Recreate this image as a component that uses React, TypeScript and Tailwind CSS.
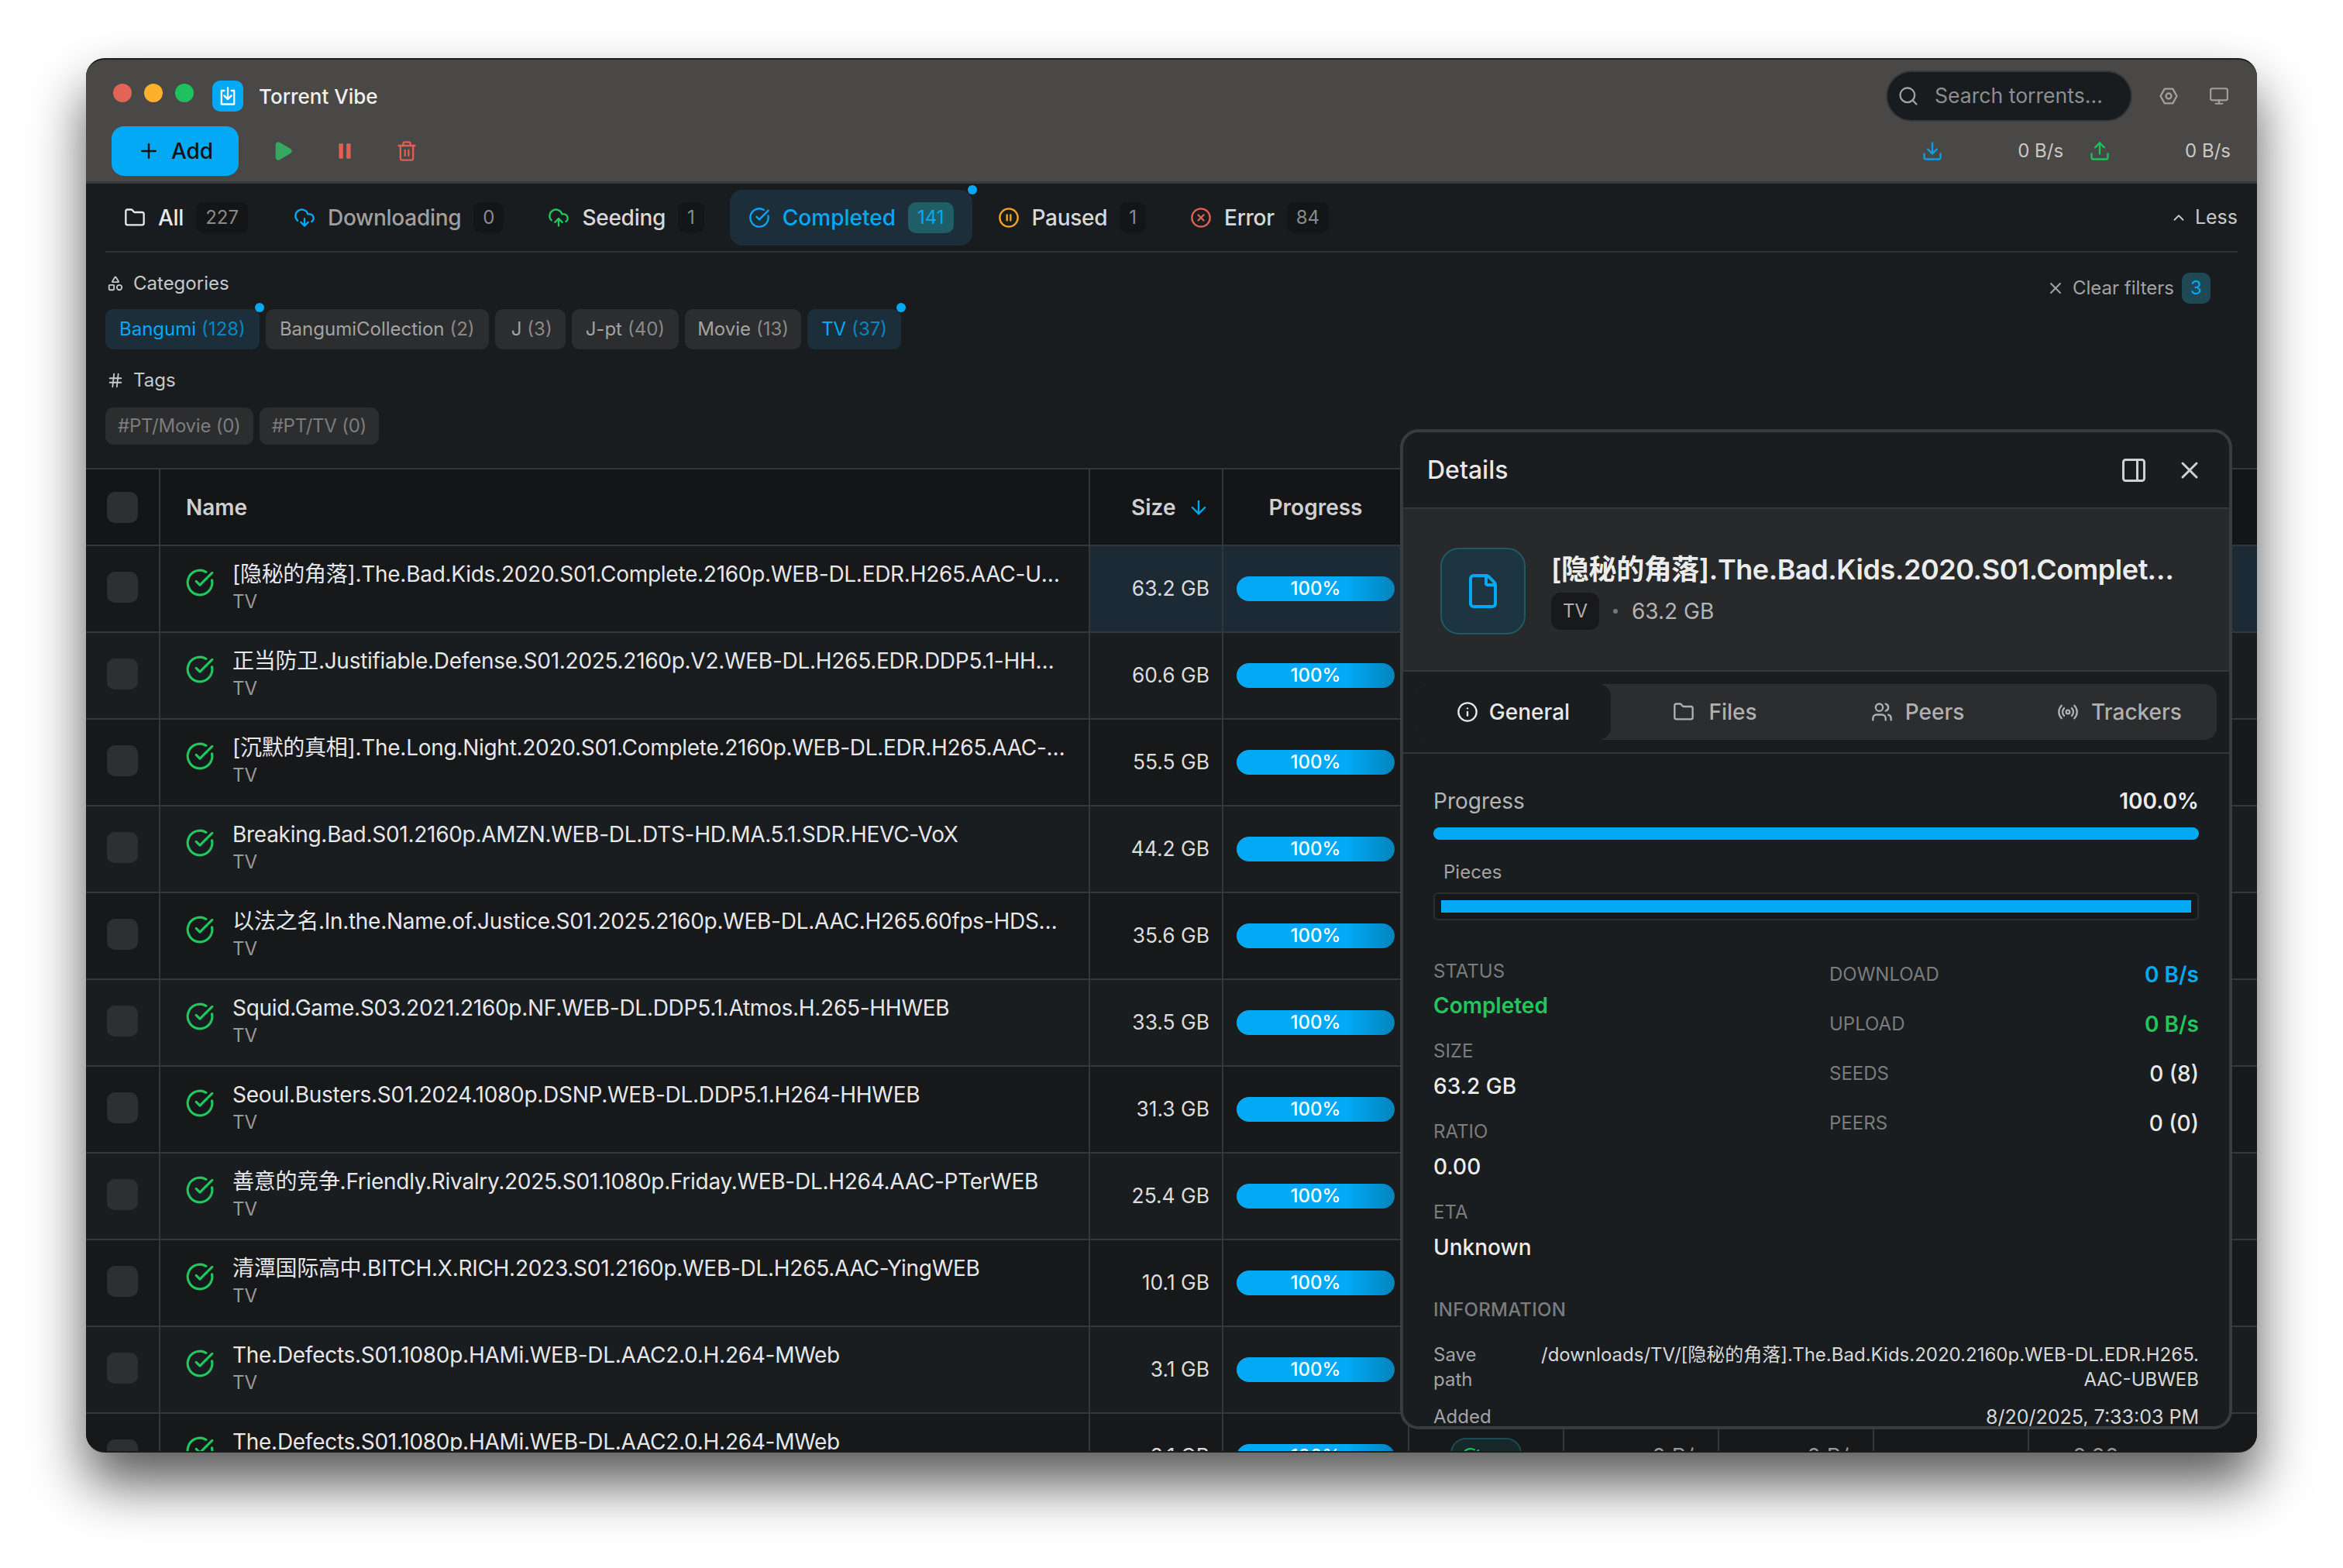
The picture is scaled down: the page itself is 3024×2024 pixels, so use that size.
import {
  ArrowDown,
  ChevronUp,
  CircleCheckBig,
  CirclePause,
  CircleX,
  CloudDownload,
  CloudUpload,
  Download,
  File,
  Folder,
  Hash,
  Info,
  Monitor,
  PanelRight,
  Pause,
  Play,
  Plus,
  Radio,
  Search,
  Shapes,
  Trash2,
  Upload,
  Users,
  X,
  type LucideIcon,
} from "lucide-react";

const rows = [
  ["[隐秘的角落].The.Bad.Kids.2020.S01.Complete.2160p.WEB-DL.EDR.H265.AAC-UBWEB", "63.2 GB"],
  ["正当防卫.Justifiable.Defense.S01.2025.2160p.V2.WEB-DL.H265.EDR.DDP5.1-HHWEB", "60.6 GB"],
  ["[沉默的真相].The.Long.Night.2020.S01.Complete.2160p.WEB-DL.EDR.H265.AAC-UBWEB", "55.5 GB"],
  ["Breaking.Bad.S01.2160p.AMZN.WEB-DL.DTS-HD.MA.5.1.SDR.HEVC-VoX", "44.2 GB"],
  ["以法之名.In.the.Name.of.Justice.S01.2025.2160p.WEB-DL.AAC.H265.60fps-HDSWEB", "35.6 GB"],
  ["Squid.Game.S03.2021.2160p.NF.WEB-DL.DDP5.1.Atmos.H.265-HHWEB", "33.5 GB"],
  ["Seoul.Busters.S01.2024.1080p.DSNP.WEB-DL.DDP5.1.H264-HHWEB", "31.3 GB"],
  ["善意的竞争.Friendly.Rivalry.2025.S01.1080p.Friday.WEB-DL.H264.AAC-PTerWEB", "25.4 GB"],
  ["清潭国际高中.BITCH.X.RICH.2023.S01.2160p.WEB-DL.H265.AAC-YingWEB", "10.1 GB"],
  ["The.Defects.S01.1080p.HAMi.WEB-DL.AAC2.0.H.264-MWeb", "3.1 GB"],
  ["The.Defects.S01.1080p.HAMi.WEB-DL.AAC2.0.H.264-MWeb", "3.1 GB"],
];

const leftStats = [
  ["SIZE", "63.2 GB"],
  ["RATIO", "0.00"],
  ["ETA", "Unknown"],
];

const rightStats = [
  ["DOWNLOAD", "0 B/s", "font-semibold text-[#03a9f4]"],
  ["UPLOAD", "0 B/s", "font-semibold text-[#22c55e]"],
  ["SEEDS", "0 (8)", "font-medium text-[#e8e8e8]"],
  ["PEERS", "0 (0)", "font-medium text-[#e8e8e8]"],
];

function StatusTab({
  icon: Icon,
  label,
  count,
  iconClass,
  textClass,
  className = "",
}: {
  icon: LucideIcon;
  label: string;
  count: string;
  iconClass: string;
  textClass: string;
  className?: string;
}) {
  return (
    <div className={`flex h-[72px] items-center gap-4 px-6 ${className}`}>
      <Icon size={28} strokeWidth={2} className={iconClass} />
      <span className={`text-[28px] font-medium tracking-[-0.01em] ${textClass}`}>{label}</span>
      <span className="flex h-10 items-center justify-center rounded-[10px] bg-[#141516] px-3 text-[24px] text-[#8a8a8a]">
        {count}
      </span>
    </div>
  );
}

function Chip({
  name,
  count,
  active,
  dot,
  pad = "px-[18px]",
}: {
  name: string;
  count: string;
  active?: boolean;
  dot?: boolean;
  pad?: string;
}) {
  return (
    <div
      className={`relative flex h-[52px] items-center gap-[7px] rounded-[10px] text-[24px] ${pad} ${
        active ? "bg-[#1b2e3a] text-[#03a9f4]" : "bg-[#2c2d2f] text-[#a3a3a3]"
      }`}
    >
      <span>{name}</span>
      <span className={active ? "text-[#0a86be]" : "text-[#8a8a8a]"}>{count}</span>
      {dot && <span className="absolute -right-[6px] -top-2 h-3 w-3 rounded-full bg-[#03a9f4]" />}
    </div>
  );
}

function TorrentRow({ name, size, index, last }: { name: string; size: string; index: number; last: boolean }) {
  const selected = index === 0;
  const stripe = index % 2 === 0 ? "bg-[#16181a]" : "bg-[#191d1f]";
  const cell = selected ? "bg-[#1b2a35]" : stripe;
  return (
    <div className="flex h-[112px] shrink-0 border-b-2 border-[#35363a]">
      <div className={`flex w-[96px] shrink-0 items-center justify-center border-r-2 border-[#35363a] pb-1 ${stripe}`}>
        <div className="h-10 w-10 rounded-[10px] bg-[#2e2f31]" />
      </div>
      <div className={`flex w-[1200px] shrink-0 items-center gap-[23px] border-r-2 border-[#35363a] pl-[32px] pr-[30px] ${stripe}`}>
        <CircleCheckBig size={38} strokeWidth={2} className="mt-[-16px] shrink-0 text-[#22c55e]" />
        <div className="min-w-0 flex-1 pb-1">
          <div className="truncate text-[28px] leading-[36px] tracking-[-0.01em] text-[#e6e7ea]">{name}</div>
          <div className="mt-[2px] text-[24px] leading-[32px] text-[#9a9a9a]">TV</div>
        </div>
      </div>
      <div className={`flex w-[172px] shrink-0 items-center justify-end border-r-2 border-[#35363a] pr-4 text-[26.4px] text-[#dcdcdc] ${cell}`}>
        {size}
      </div>
      <div className={`flex w-[240px] shrink-0 items-center border-r-2 border-[#35363a] px-[17px] ${cell}`}>
        <div className="flex h-8 w-full items-center justify-center rounded-full bg-[linear-gradient(90deg,#03a9f4_70%,#0284bd)] text-[24px] font-medium text-white">
          100%
        </div>
      </div>
      {/* these columns sit behind the details panel, only the last row shows below it */}
      <div className={`flex w-[200px] shrink-0 items-center justify-center border-r-2 border-[#35363a] ${cell}`}>
        {last && (
          <div className="flex h-12 w-[92px] items-center rounded-[20px] border-2 border-[#1f4a4f] bg-[#16282a] pl-3">
            <CircleCheckBig size={24} strokeWidth={2} className="text-[#22c55e]" />
          </div>
        )}
      </div>
      <div className={`flex w-[200px] shrink-0 items-center justify-end border-r-2 border-[#35363a] pr-4 text-[28px] text-[#9a9a9a] ${cell}`}>
        {last && "0 B/s"}
      </div>
      <div className={`flex w-[200px] shrink-0 items-center justify-end border-r-2 border-[#35363a] pr-4 text-[28px] text-[#9a9a9a] ${cell}`}>
        {last && "0 B/s"}
      </div>
      <div className={`w-[200px] shrink-0 border-r-2 border-[#35363a] ${cell}`} />
      <div className={`flex flex-1 items-center pl-[56px] text-[28px] text-[#9a9a9a] ${cell}`}>{last && "0.00"}</div>
    </div>
  );
}

function DetailsPanel() {
  return (
    <div className="absolute left-[1696px] top-[477px] flex h-[1291px] w-[1074px] flex-col overflow-hidden rounded-[24px] border-4 border-[#3a3b3d] bg-[#191d1f]">
      <div className="flex h-[99px] shrink-0 items-center justify-between border-b-2 border-[#35363a] pl-[31px] pr-[33px]">
        <span className="text-[32px] font-medium text-[#e8e8e8]">Details</span>
        <div className="flex items-center gap-[36px] text-[#d0d0d0]">
          <PanelRight size={36} strokeWidth={2} />
          <X size={36} strokeWidth={2} />
        </div>
      </div>
      <div className="flex h-[210px] shrink-0 items-center gap-[33px] border-b-2 border-[#35363a] bg-[#28292b] pl-[48px] pr-[56px] pt-1">
        <div className="flex h-[112px] w-[110px] shrink-0 items-center justify-center rounded-[24px] border-2 border-[#1f5a66] bg-[#1c3541]">
          <File size={48} strokeWidth={2} className="text-[#03a9f4]" />
        </div>
        <div className="min-w-0 flex-1">
          <div className="truncate text-[36px] font-semibold leading-[44px] tracking-[-0.012em] text-[#ececec]">
            [隐秘的角落].The.Bad.Kids.2020.S01.Complete.2160p.WEB-DL
          </div>
          <div className="mt-2 flex items-center">
            <span className="flex h-12 w-[62px] items-center justify-center rounded-[12px] bg-[#18191b] text-[24px] text-[#b0b0b0]">
              TV
            </span>
            <span className="ml-[18px] h-[6px] w-[6px] rounded-full bg-[#777]" />
            <span className="ml-[18px] text-[28px] text-[#b5b5b5]">63.2 GB</span>
          </div>
        </div>
      </div>
      <div className="shrink-0 border-b-2 border-[#35363a] px-[16px] pb-4 pt-[16px]">
        <div className="grid h-[72px] w-[1034px] grid-cols-[252px_265px_258px_1fr] overflow-hidden rounded-[16px] bg-[#2c2d2f] text-[28px] font-medium text-[#b0b0b0]">
          <div className="flex items-center justify-center gap-[14px] rounded-[16px] bg-[#191d1f] text-[#e8e8e8]">
            <Info size={28} strokeWidth={2} />
            General
          </div>
          <div className="flex items-center justify-center gap-[18px] pl-1">
            <Folder size={28} strokeWidth={2} />
            Files
          </div>
          <div className="flex items-center justify-center gap-[16px] pl-1">
            <Users size={28} strokeWidth={2} />
            Peers
          </div>
          <div className="flex items-center justify-center gap-[16px] pl-2">
            <Radio size={28} strokeWidth={2} />
            Trackers
          </div>
        </div>
      </div>
      <div className="flex-1 overflow-hidden pl-[39px] pr-[39px] pt-[43px]">
        <div className="flex items-center justify-between text-[28px] leading-[36px]">
          <span className="text-[#b5b5b5]">Progress</span>
          <span className="font-semibold text-[#ececec]">100.0%</span>
        </div>
        <div className="mt-4 h-4 rounded-full bg-[#03a9f4]" />
        <div className="ml-[13px] mt-[26px] text-[24px] leading-[32px] text-[#a3a3a3]">Pieces</div>
        <div className="mt-[10px] flex h-9 items-center rounded-[6px] border-2 border-[#2c2d2f] bg-[#151718] px-2">
          <div className="h-4 w-full bg-[#03a9f4]" />
        </div>
        <div className="mt-[48px] grid grid-cols-[511px_1fr]">
          <div>
            <div className="pt-[2px] text-[24px] leading-[32px] text-[#7c7c7c]">STATUS</div>
            <div className="mt-[12px] text-[28px] font-semibold leading-[32px] text-[#22c55e]">Completed</div>
            {leftStats.map(([label, value]) => (
              <div key={label}>
                <div className="mt-[27px] text-[24px] leading-[32px] text-[#7c7c7c]">{label}</div>
                <div className="mt-[13px] text-[28px] font-medium leading-[32px] text-[#ececec]">{value}</div>
              </div>
            ))}
          </div>
          <div className="flex flex-col gap-6 pt-[2px]">
            {rightStats.map(([label, value, color]) => (
              <div key={label} className="flex h-10 items-center justify-between">
                <span className="text-[24px] text-[#7c7c7c]">{label}</span>
                <span className={`text-[28px] ${color}`}>{value}</span>
              </div>
            ))}
          </div>
        </div>
        <div className="mt-[49px] text-[24px] font-medium leading-[32px] tracking-[0.01em] text-[#7c7c7c]">INFORMATION</div>
        <div className="mt-[26px] flex justify-between text-[24px] leading-[32px]">
          <span className="w-[100px] shrink-0 text-[#a3a3a3]">Save path</span>
          <span className="flex-1 text-right text-[#d8d8d8]">
            /downloads/TV/[隐秘的角落].The.Bad.Kids.2020.2160p.WEB-DL.EDR.H265.<wbr />AAC-UBWEB
          </span>
        </div>
        <div className="mt-4 flex justify-between text-[24px] leading-[32px]">
          <span className="text-[#a3a3a3]">Added</span>
          <span className="text-[25px] text-[#d8d8d8]">8/20/2025, 7:33:03 PM</span>
        </div>
      </div>
    </div>
  );
}

export default function App() {
  return (
    <div className="h-[2024px] w-[3024px] overflow-hidden bg-white pl-[111px] pt-[75px] font-['Inter','Noto_Sans_CJK_SC',sans-serif]">
      <div className="relative flex h-[1800px] w-[2802px] flex-col overflow-hidden rounded-[24px] border-b-2 border-t-2 border-[#1c1c1c] bg-[#181c1e] shadow-[0_40px_70px_rgba(0,0,0,0.65)]">
        {/* title bar */}
        <div className="h-[160px] shrink-0 border-b-[3px] border-[#3a3a3a] bg-[#4a4846] pl-[33px] pr-[36px]">
          <div className="flex h-[86px] items-center pl-[2px] pt-2">
            <div className="mb-2 flex items-center gap-4">
              <span className="h-6 w-6 rounded-full bg-[#e36456]" />
              <span className="h-6 w-6 rounded-full bg-[#fdb02c]" />
              <span className="h-6 w-6 rounded-full bg-[#1fc15d]" />
            </div>
            <div className="ml-6 flex h-10 w-10 items-center justify-center rounded-[10px] bg-[#03a9f4]">
              <svg viewBox="0 0 24 24" className="h-7 w-7" fill="none" stroke="white" strokeWidth="2" strokeLinecap="round" strokeLinejoin="round">
                <path d="M8 6H5v15h14V6h-3" />
                <path d="M12 3v12M8 11.5l4 4 4-4" />
              </svg>
            </div>
            <span className="ml-5 text-[26px] font-medium text-[#f0f0f0]">Torrent Vibe</span>
            <div className="ml-auto flex items-center">
              <div className="flex h-[66px] w-[318px] items-center gap-5 rounded-full border-2 border-[#3a3a3c] bg-[#181c1e] pl-[13px] text-[26.6px] text-[#8e8e8e]">
                <Search size={28} strokeWidth={2} className="text-[#a0a0a0]" />
                Search torrents...
              </div>
              <svg viewBox="0 0 24 24" className="ml-[33px] h-7 w-7 text-[#a0a0a0]" fill="none" stroke="currentColor" strokeWidth="2" strokeLinejoin="round">
                <path d="M3 12l4.5-8h9l4.5 8-4.5 8h-9z" />
                <circle cx="12" cy="12" r="3" />
              </svg>
              <Monitor size={26} strokeWidth={2} className="ml-[38px] text-[#a0a0a0]" />
            </div>
          </div>
          <div className="-mr-[2px] flex h-16 items-center">
            <div className="flex h-16 w-[164px] items-center justify-center gap-[14px] rounded-[16px] bg-[#03a9f4] text-[28px] font-medium text-[#101214]">
              <Plus size={30} strokeWidth={2} />
              Add
            </div>
            <Play size={28} strokeWidth={2} className="ml-[43px] fill-[#36a860] text-[#36a860]" />
            <Pause size={26} strokeWidth={0} className="ml-[53px] fill-[#e0604f] text-[#e0604f]" />
            <Trash2 size={28} strokeWidth={2} className="ml-[53px] text-[#e0604f]" />
            <div className="ml-auto flex items-center text-[24px] text-[#c8c8c8]">
              <Download size={28} strokeWidth={2} className="text-[#0f9ee0]" />
              <span className="ml-[96px]">0 B/s</span>
              <Upload size={28} strokeWidth={2} className="ml-[33px] text-[#1fc15d]" />
              <span className="ml-[96px]">0 B/s</span>
            </div>
          </div>
        </div>

        {/* status tabs */}
        <div className="mx-[25px] flex h-[89px] shrink-0 items-center gap-[9px] border-b-2 border-[#2e3032]">
          <StatusTab icon={Folder} label="All" count="227" iconClass="text-[#e8e8e8]" textClass="text-[#e8e8e8]" className="mr-[2px]" />
          <StatusTab icon={CloudDownload} label="Downloading" count="0" iconClass="text-[#03a9f4]" textClass="text-[#a0a0a0]" />
          <StatusTab icon={CloudUpload} label="Seeding" count="1" iconClass="text-[#22c55e]" textClass="text-[#d8d8d8]" />
          <div className="relative flex h-[72px] items-center gap-4 rounded-[16px] bg-[#1b2e3a] px-6 text-[#03a9f4]">
            <CircleCheckBig size={28} strokeWidth={2} />
            <span className="text-[28px] font-medium">Completed</span>
            <span className="flex h-10 items-center rounded-[10px] bg-[#1f5e66] px-3 text-[24px]">141</span>
            <span className="absolute -right-[6px] -top-[6px] h-3 w-3 rounded-full bg-[#03a9f4]" />
          </div>
          <StatusTab icon={CirclePause} label="Paused" count="1" iconClass="text-[#f5a524]" textClass="text-[#d8d8d8]" />
          <StatusTab icon={CircleX} label="Error" count="84" iconClass="text-[#e0604f]" textClass="text-[#d8d8d8]" />
          <div className="ml-auto flex items-center gap-[10px] text-[25px] text-[#c8c8c8]">
            <ChevronUp size={22} strokeWidth={2} />
            Less
          </div>
        </div>

        {/* filters */}
        <div className="relative mx-[25px] h-[278px] shrink-0">
          <div className="flex items-center gap-3 pl-[2px] pt-6 text-[24px] leading-[32px] text-[#c8c8c8]">
            <Shapes size={22} strokeWidth={2} />
            Categories
          </div>
          <div className="mt-[17px] flex gap-2">
            <Chip name="Bangumi" count="(128)" active dot />
            <Chip name="BangumiCollection" count="(2)" />
            <Chip name="J" count="(3)" pad="pl-[21px] pr-[17px]" />
            <Chip name="J-pt" count="(40)" />
            <Chip name="Movie" count="(13)" pad="px-4" />
            <Chip name="TV" count="(37)" active dot />
          </div>
          <div className="mt-[24px] flex items-center gap-3 pl-[2px] text-[24px] leading-[32px] text-[#c8c8c8]">
            <Hash size={22} strokeWidth={2} />
            Tags
          </div>
          <div className="mt-[19px] flex gap-2">
            <div className="flex h-12 items-center rounded-[10px] bg-[#2c2d2f] px-4 text-[24px] tracking-[-0.01em] text-[#7c7c7c]">
              #PT/Movie (0)
            </div>
            <div className="flex h-12 items-center rounded-[10px] bg-[#2c2d2f] px-4 text-[24px] tracking-[-0.01em] text-[#7c7c7c]">
              #PT/TV (0)
            </div>
          </div>
          <div className="absolute right-[35px] top-[26px] flex items-center gap-[10px] text-[24px] text-[#a3a3a3]">
            <X size={24} strokeWidth={2} />
            Clear filters
            <span className="flex h-10 w-[37px] items-center justify-center rounded-[10px] bg-[#1f4a55] text-[#03a9f4]">3</span>
          </div>
        </div>

        {/* table */}
        <div className="min-h-0 flex-1 overflow-hidden border-t-2 border-[#35363a]">
          <div className="flex h-[99px] border-b-2 border-[#35363a] bg-[#131517] text-[28px] font-semibold text-[#cfcfcf]">
            <div className="flex w-[96px] shrink-0 items-center justify-center border-r-2 border-[#35363a]">
              <div className="h-10 w-10 rounded-[10px] bg-[#2e2f31]" />
            </div>
            <div className="flex w-[1200px] shrink-0 items-center border-r-2 border-[#35363a] pl-[33px]">Name</div>
            <div className="flex w-[172px] shrink-0 items-center border-r-2 border-[#35363a] pl-[53px]">
              Size
              <ArrowDown size={28} strokeWidth={2} className="ml-4 text-[#03a9f4]" />
            </div>
            <div className="flex w-[240px] shrink-0 items-center justify-center border-r-2 border-[#35363a]">Progress</div>
          </div>
          {rows.map(([name, size], i) => (
            <TorrentRow key={i} name={name} size={size} index={i} last={i === rows.length - 1} />
          ))}
        </div>

        <DetailsPanel />
      </div>
    </div>
  );
}
